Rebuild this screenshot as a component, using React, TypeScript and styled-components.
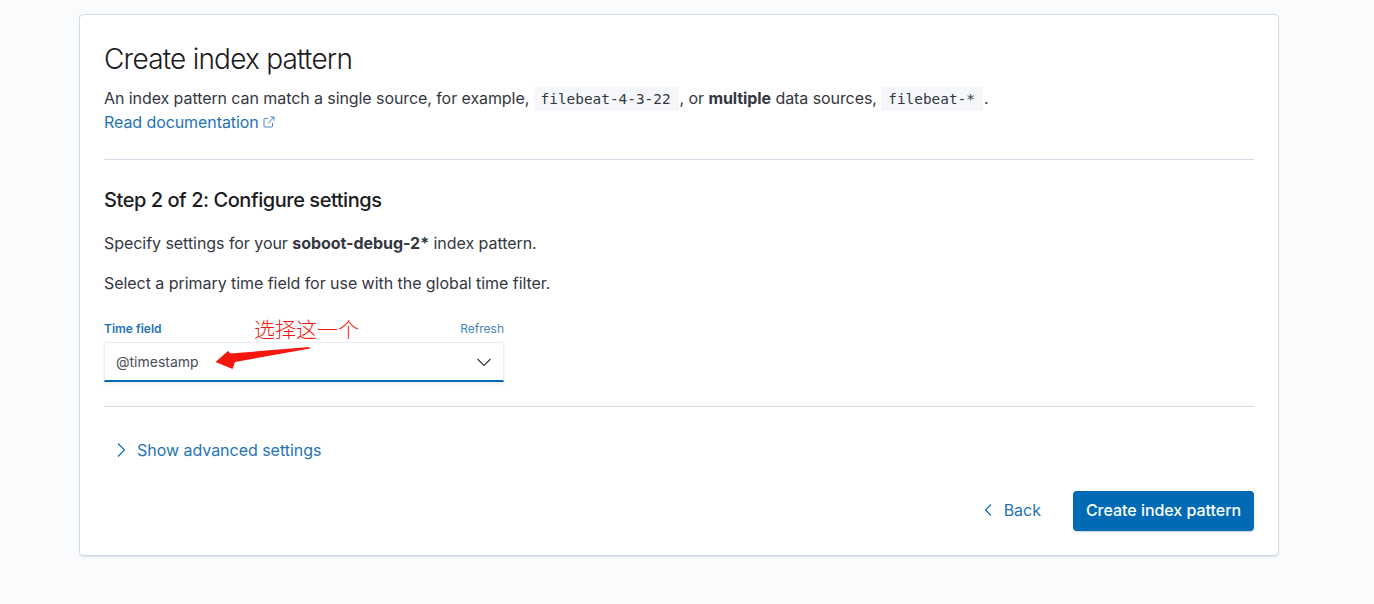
import React from 'react';
import styled, { createGlobalStyle } from 'styled-components';

const GlobalStyle = createGlobalStyle`
  html, body {
    margin: 0;
    padding: 0;
    background: #fafbfd;
    font-family: Inter, "Noto Sans", sans-serif;
    overflow: hidden;
  }
`;

const Page = styled.div`
  width: 1374px;
  height: 604px;
  padding-top: 14px;
  box-sizing: border-box;
  background: #fafbfd;
`;

const Panel = styled.div`
  width: 1200px;
  height: 542px;
  margin-left: 79px;
  padding: 24px;
  box-sizing: border-box;
  background: #fff;
  border: 1px solid #d3dae6;
  border-radius: 4px;
  box-shadow: 0 2px 2px -1px rgba(152, 162, 179, 0.3);
  display: flex;
  flex-direction: column;
`;

const Title = styled.h1`
  margin: 0;
  font-size: 28px;
  line-height: 40px;
  font-weight: 300;
  letter-spacing: -0.78px;
  color: #1a1c21;
`;

const Intro = styled.div`
  margin-top: 7px;
  font-size: 16px;
  line-height: 24px;
  letter-spacing: -0.08px;
  color: #343741;
  strong {
    font-weight: 700;
  }
`;

const Code = styled.code`
  display: inline-block;
  margin-right: 1px;
  padding: 0 8px 0 7px;
  font-family: "DejaVu Sans Mono", monospace;
  font-size: 14.4px;
  line-height: 24px;
  letter-spacing: 0;
  background: #f5f7fa;
  color: #343741;
`;

const DocLink = styled.a`
  display: inline-flex;
  align-items: center;
  gap: 4px;
  height: 22px;
  vertical-align: top;
  color: #1f73b7;
`;

const Rule = styled.hr<{ $top: number }>`
  width: 100%;
  height: 1px;
  margin: ${(p) => p.$top}px 0 0;
  border: 0;
  background: #d3dae6;
`;

const StepTitle = styled.h2`
  margin: 26px 0 0;
  font-size: 20px;
  line-height: 28px;
  font-weight: 500;
  letter-spacing: -0.45px;
  color: #1a1c21;
`;

const Para = styled.p<{ $top: number }>`
  margin: ${(p) => p.$top}px 0 0;
  font-size: 16px;
  line-height: 24px;
  letter-spacing: -0.05px;
  color: #343741;
  strong {
    font-weight: 700;
  }
`;

const Field = styled.div`
  position: relative;
  width: 400px;
  margin-top: 24px;
`;

const LabelRow = styled.div`
  display: flex;
  justify-content: space-between;
  align-items: center;
  height: 18px;
  margin-bottom: 5px;
`;

const Label = styled.label`
  font-size: 12px;
  font-weight: 600;
  color: #1f73b7;
`;

const Refresh = styled.a`
  font-size: 12px;
  color: #4a86bd;
`;

const Select = styled.div`
  height: 40px;
  padding: 0 11px;
  box-sizing: border-box;
  display: flex;
  align-items: center;
  justify-content: space-between;
  background: #fff;
  border: 1px solid #e9ecf3;
  border-bottom: 2px solid #006bb4;
  box-shadow: 0 2px 3px rgba(0, 0, 0, 0.06);
  font-size: 14px;
  color: #4a4d57;
`;

const Note = styled.span`
  position: absolute;
  left: 150px;
  top: -4px;
  font-family: "Noto Sans CJK SC", sans-serif;
  font-size: 21px;
  font-weight: 300;
  line-height: 26px;
  color: #f2180f;
`;

const Arrow = styled.svg`
  position: absolute;
  left: 111px;
  top: 24px;
`;

const Advanced = styled.a`
  display: flex;
  align-items: center;
  gap: 8px;
  margin: 31px 0 0 9px;
  font-size: 16px;
  line-height: 24px;
  letter-spacing: -0.03px;
  color: #1f73b7;
`;

const Footer = styled.div`
  display: flex;
  justify-content: flex-end;
  align-items: center;
  margin-top: auto;
`;

const BackLink = styled.a`
  display: flex;
  align-items: center;
  gap: 12px;
  margin-right: 32px;
  padding-bottom: 2px;
  font-size: 16px;
  color: #1f73b7;
`;

const Primary = styled.button`
  width: 181px;
  height: 40px;
  padding: 0 0 2px;
  border: 0;
  border-radius: 4px;
  background: #006bb4;
  box-shadow: 0 2px 2px -1px rgba(54, 97, 126, 0.3);
  font-family: inherit;
  font-size: 16px;
  font-weight: 500;
  letter-spacing: -0.03px;
  color: #fff;
`;

const Chevron = ({ d, color = '#006bb4' }: { d: string; color?: string }) => (
  <svg width="16" height="16" viewBox="0 0 16 16" fill="none">
    <path d={d} stroke={color} strokeWidth="1.1" />
  </svg>
);

const App = () => {
  return (
    <Page>
      <GlobalStyle />
      <Panel>
        <Title>Create index pattern</Title>
        <Intro>
          An index pattern can match a single source, for example, <Code>filebeat-4-3-22</Code>, or{' '}
          <strong>multiple</strong> data sources, <Code>filebeat-*</Code>.
          <br />
          <DocLink>
            Read documentation
            <svg width="12" height="12" viewBox="0 0 12 12" fill="none">
              <path d="M5 2.500H2a1 1 0 0 0-1 1V10a1 1 0 0 0 1 1h6.500a1 1 0 0 0 1-1V7M5 7.500 11 1M7.500 1H11v3.500" stroke="#4a86bd" strokeWidth="1" />
            </svg>
          </DocLink>
        </Intro>
        <Rule $top={24} />
        <StepTitle>Step 2 of 2: Configure settings</StepTitle>
        <Para $top={17}>
          Specify settings for your <strong>soboot-debug-2*</strong> index pattern.
        </Para>
        <Para $top={16}>Select a primary time field for use with the global time filter.</Para>
        <Field>
          <LabelRow>
            <Label>Time field</Label>
            <Refresh>Refresh</Refresh>
          </LabelRow>
          <Select>
            @timestamp
            <Chevron d="M1.500 5 8 11.500 14.500 5" color="#343741" />
          </Select>
          <Note>选择这一个</Note>
          <Arrow width="96" height="27" viewBox="0 0 96 27">
            <path d="M0.500 19 13 8 15.500 10.500 94.500 4 95 5.500 20 19 17.500 26Z" fill="#f5170d" />
          </Arrow>
        </Field>
        <Rule $top={24} />
        <Advanced>
          <Chevron d="M5 1.500 11.500 8 5 14.500" />
          Show advanced settings
        </Advanced>
        <Footer>
          <BackLink>
            <Chevron d="M15 2.500 9.500 8 15 13.500" />
            Back
          </BackLink>
          <Primary>Create index pattern</Primary>
        </Footer>
      </Panel>
    </Page>
  );
};

export default App;
